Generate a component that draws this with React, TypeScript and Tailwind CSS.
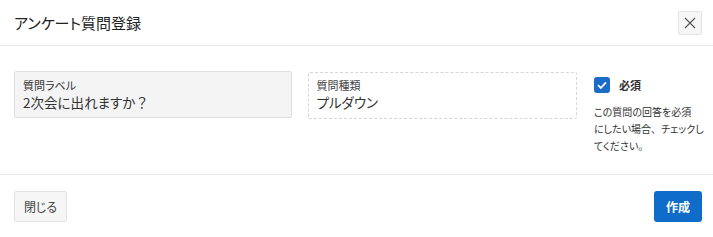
import React from "react";

export default function App() {
  return (
    <div
      className="w-[713px] h-[237px] bg-white flex flex-col text-[#222] [font-feature-settings:'palt']"
      style={{ fontFamily: '"Noto Sans CJK JP", "Noto Sans", sans-serif' }}
    >
      <div className="h-[46px] flex items-center justify-between pl-[14px] pr-[11px] border-b border-[#e6e6e6]">
        <div className="text-[15px] leading-none text-[#222]">アンケート質問登録</div>
        <button className="w-[24px] h-[24px] flex items-center justify-center bg-[#f6f6f6] border border-[#e4e4e4] rounded-[2px]">
          <svg width="12" height="12" viewBox="0 0 12 12">
            <path d="M1 1L11 11M11 1L1 11" stroke="#555" strokeWidth="1.1" />
          </svg>
        </button>
      </div>
      <div className="h-[129px] flex pl-[14px] pr-[11px] pt-[25px] border-b border-[#e6e6e6]">
        <div className="w-[279px] h-[47px] bg-[#f4f4f4] border border-[#dedede] rounded-[2px] pl-[8px] pt-[6px]">
          <div className="text-[11px] leading-[14px] text-[#333]">質問ラベル</div>
          <div className="text-[13.5px] leading-[20px] text-[#333]">
            2次会に出れますか<span className="[font-feature-settings:normal]">？</span>
          </div>
        </div>
        <div className="ml-[16px] mt-[1px] w-[269px] h-[47px] border border-dashed border-[#d6d6d6] rounded-[2px] pl-[7px] pt-[5px]">
          <div className="text-[11px] leading-[14px] text-[#444]">質問種類</div>
          <div className="text-[13.5px] leading-[20px] text-[#333]">プルダウン</div>
        </div>
        <div className="ml-[17px] mt-[6px] w-[108px]">
          <div className="flex items-center">
            <div className="w-[16px] h-[16px] rounded-[3px] bg-[#1a6cc8] flex items-center justify-center">
              <svg width="12" height="12" viewBox="0 0 12 12">
                <path d="M2 6.2L4.8 9L10 3.4" stroke="white" strokeWidth="1.8" fill="none" />
              </svg>
            </div>
            <div className="ml-[9px] text-[11px] font-bold text-[#333]">必須</div>
          </div>
          <div className="mt-[9px] text-[10px] leading-[17px] text-[#333] whitespace-nowrap">
            この質問の回答を必須
            <br />
            にしたい場合<span className="[font-feature-settings:normal]">、</span>チェックし
            <br />
            てください。
          </div>
        </div>
      </div>
      <div className="flex-1 flex items-start justify-between pl-[14px] pr-[11px] pt-[16px]">
        <button className="w-[53px] h-[31px] bg-[#f6f6f6] border border-[#e2e2e2] rounded-[2px] text-[12px] text-[#444]">
          閉じる
        </button>
        <button className="w-[48px] h-[31px] bg-[#0f6cc8] rounded-[3px] text-[12px] font-bold text-white">
          作成
        </button>
      </div>
    </div>
  );
}
